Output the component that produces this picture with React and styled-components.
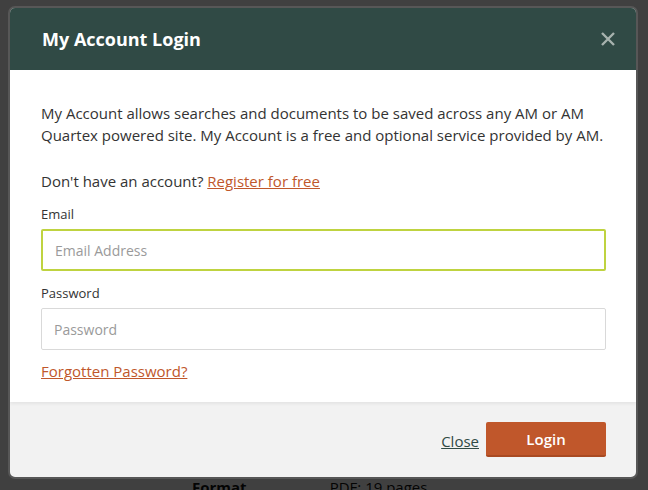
import React from 'react';
import styled, { createGlobalStyle } from 'styled-components';

const GlobalStyle = createGlobalStyle`
  html, body {
    margin: 0;
    padding: 0;
    width: 648px;
    height: 490px;
    overflow: hidden;
    font-family: 'Open Sans', 'Noto Sans', sans-serif;
  }
`;

const Page = styled.div`
  position: relative;
  width: 648px;
  height: 490px;
  background: #ffffff;
  overflow: hidden;
`;

const PageFooter = styled.div`
  display: flex;
  gap: 83px;
  padding: 477px 0 0 192px;
  font-size: 15px;
  color: #111;
`;

const FooterKey = styled.span`
  font-weight: 700;
`;

const Overlay = styled.div`
  position: absolute;
  inset: 0;
  background: rgba(0, 0, 0, 0.75);
  padding: 6px 0 0 8px;
`;

const Modal = styled.div`
  width: 626px;
  border: 2px solid #575757;
  border-radius: 7px;
  overflow: hidden;
  background: #f2f2f2;
`;

const Header = styled.div`
  height: 62px;
  background: #304a45;
  display: flex;
  align-items: center;
  justify-content: space-between;
  padding: 0 20px 0 32px;
`;

const Title = styled.h1`
  margin: 0;
  font-size: 18px;
  font-weight: 700;
  color: #ffffff;
`;

const CloseIcon = styled.button`
  border: none;
  background: none;
  padding: 0;
  display: flex;
  color: #a7b2ae;
`;

const Body = styled.div`
  background: #ffffff;
  padding: 32px 30px 20px 31px;
  box-shadow: 0 2px 3px rgba(0, 0, 0, 0.06);
`;

const Text = styled.p`
  margin: 0 0 ${(p) => p.$mb || 0}px;
  font-size: 15px;
  line-height: 22px;
  color: #333;
`;

const Link = styled.a`
  color: #c0572b;
  text-decoration: underline;
`;

const Label = styled.label`
  display: block;
  font-size: 13px;
  line-height: 18px;
  color: #333;
  margin-bottom: 6px;
`;

const Input = styled.input`
  display: block;
  box-sizing: border-box;
  width: 100%;
  height: 42px;
  margin-bottom: ${(p) => p.$mb}px;
  padding: 0 12px;
  border: ${(p) => (p.$focused ? '2px solid #bfd340' : '1px solid #d9d9d9')};
  border-radius: 2px;
  font-family: inherit;
  font-size: 14px;
  color: #333;
  outline: none;
  &::placeholder {
    color: #9a9a9a;
  }
`;

const Footer = styled.div`
  height: 75px;
  display: flex;
  align-items: center;
  justify-content: flex-end;
  gap: 7px;
  padding: 0 30px 0 0;
`;

const CloseLink = styled.a`
  font-size: 15px;
  color: #304a45;
  text-decoration: underline;
  margin-top: 2px;
`;

const LoginButton = styled.button`
  width: 120px;
  height: 35px;
  border: none;
  border-bottom: 2px solid #a94a22;
  border-radius: 2px;
  background: #c0572b;
  color: #ffffff;
  font-family: inherit;
  font-size: 15px;
  font-weight: 600;
`;

export default function App() {
  return (
    <>
      <GlobalStyle />
      <Page>
        <PageFooter>
          <FooterKey>Format</FooterKey>
          <span>PDF: 19 pages</span>
        </PageFooter>
        <Overlay>
          <Modal>
            <Header>
              <Title>My Account Login</Title>
              <CloseIcon aria-label="Close">
                <svg width="16" height="16" viewBox="0 0 16 16">
                  <path d="M2 2 L14 14 M14 2 L2 14" stroke="currentColor" strokeWidth="2.4" />
                </svg>
              </CloseIcon>
            </Header>
            <Body>
              <Text $mb={24}>
                My Account allows searches and documents to be saved across any AM or AM Quartex
                powered site. My Account is a free and optional service provided by AM.
              </Text>
              <Text $mb={13}>
                Don't have an account? <Link href="#">Register for free</Link>
              </Text>
              <Label>Email</Label>
              <Input $focused $mb={13} placeholder="Email Address" />
              <Label>Password</Label>
              <Input type="password" $mb={10} placeholder="Password" />
              <Text>
                <Link href="#">Forgotten Password?</Link>
              </Text>
            </Body>
            <Footer>
              <CloseLink href="#">Close</CloseLink>
              <LoginButton>Login</LoginButton>
            </Footer>
          </Modal>
        </Overlay>
      </Page>
    </>
  );
}
